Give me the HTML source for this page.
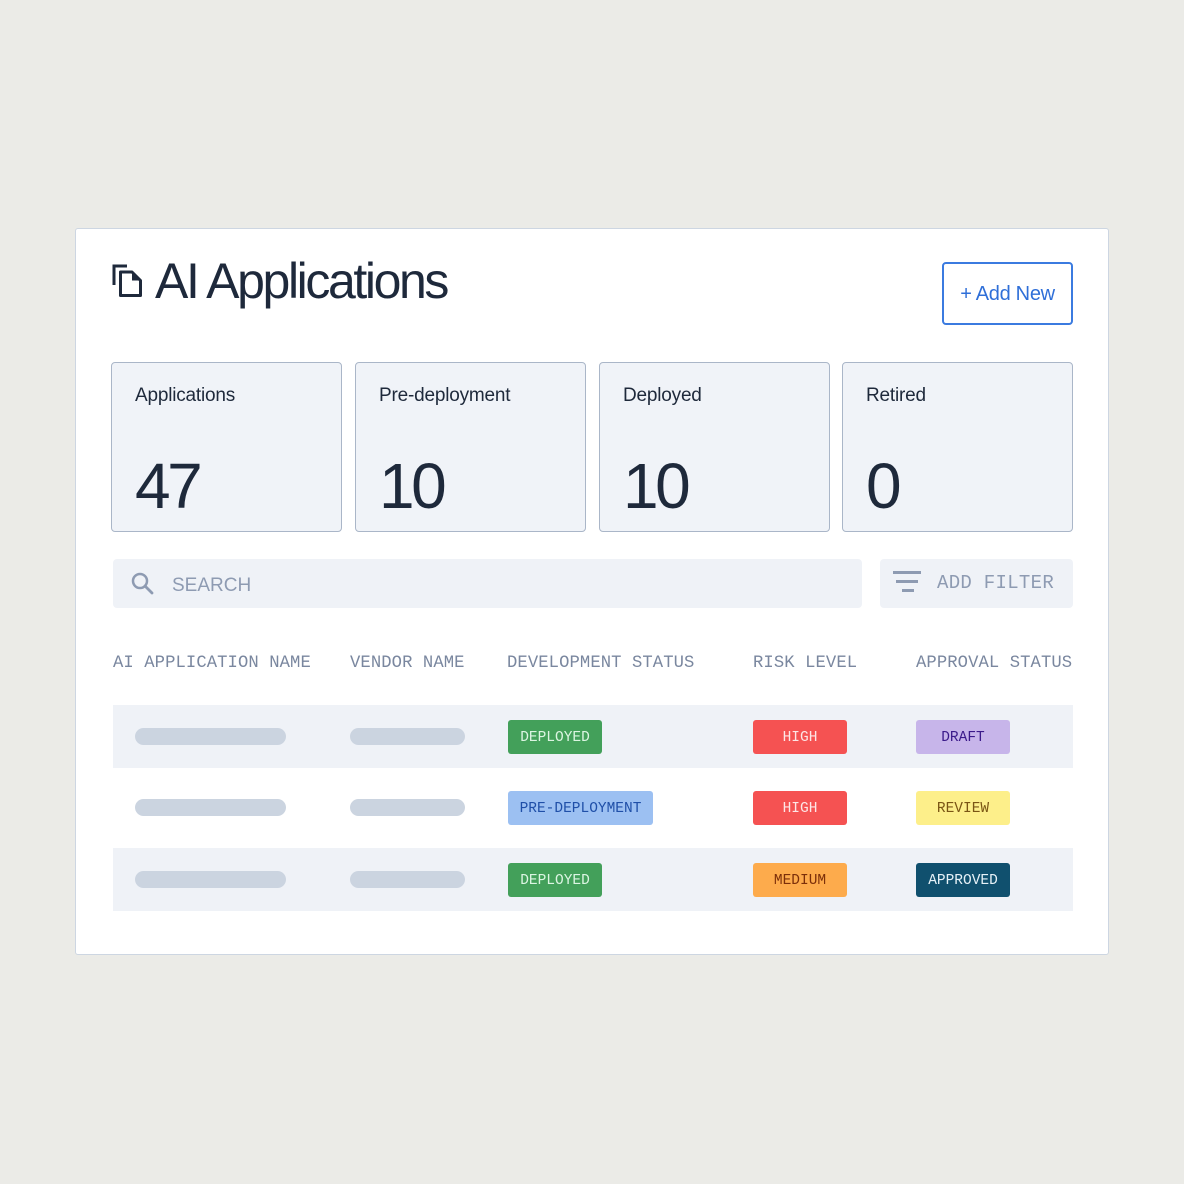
<!DOCTYPE html>
<html><head><style>
*{margin:0;padding:0;box-sizing:border-box}
body{width:1184px;height:1184px;background:#ebebe7;position:relative;font-family:"Liberation Sans",sans-serif;overflow:hidden}
.a{position:absolute}
.card{left:75px;top:228px;width:1034px;height:727px;background:#fff;border:1.5px solid #cdd6e2;border-radius:3px}
.title{left:155px;top:253px;font-size:50px;color:#1e293b;letter-spacing:-2.4px;line-height:56px;white-space:nowrap}
.btn{left:942px;top:262px;width:131px;height:63px;border:2px solid #3b7be0;border-radius:4px;color:#2f6fd8;font-size:20px;text-align:center;line-height:61px;letter-spacing:-0.3px}
.stat{top:362px;width:231px;height:170px;background:#f0f3f8;border:1.5px solid #aab6c8;border-radius:4px}
.stat .l{position:absolute;left:23px;top:22px;font-size:19px;color:#1e293b;letter-spacing:-0.2px}
.stat .n{position:absolute;left:23px;top:85px;font-size:64px;color:#1e293b;letter-spacing:-3.5px;line-height:76px}
.search{left:113px;top:559px;width:749px;height:49px;background:#eff2f7;border-radius:4px}
.filter{left:880px;top:559px;width:193px;height:49px;background:#eff2f7;border-radius:4px}
.mono{font-family:"Liberation Mono",monospace}
.ph{font-size:19px;color:#8e9bb2;line-height:49px}
.hd{top:653px;font-size:17.2px;color:#7a879f;white-space:nowrap;line-height:22px;letter-spacing:0.1px}
.row{left:113px;width:960px;height:63px;background:#eff2f7}
.bar{height:17px;background:#cbd4e0;border-radius:9px}
.bd{height:34px;border-radius:3px;font-family:"Liberation Mono",monospace;font-size:14.5px;text-align:center;line-height:36px;white-space:nowrap}
</style></head><body>
<div class="a card"></div>
<svg class="a" style="left:111px;top:262px" width="34" height="38" viewBox="0 0 34 38">
<path d="M3 23 V4 H16" fill="none" stroke="#1e293b" stroke-width="3"/>
<path d="M9.5 10 H21 L29.5 18.5 V33.5 H9.5 Z" fill="none" stroke="#1e293b" stroke-width="3" stroke-linejoin="round"/>
<path d="M21 10 L29.5 18.5 H21 Z" fill="#1e293b"/>
</svg>
<div class="a title">AI Applications</div>
<div class="a btn">+ Add New</div>

<div class="a stat" style="left:111px"><div class="l">Applications</div><div class="n">47</div></div>
<div class="a stat" style="left:355px"><div class="l">Pre-deployment</div><div class="n">10</div></div>
<div class="a stat" style="left:599px"><div class="l">Deployed</div><div class="n">10</div></div>
<div class="a stat" style="left:842px"><div class="l">Retired</div><div class="n">0</div></div>

<div class="a search"></div>
<svg class="a" style="left:128px;top:570px" width="28" height="28" viewBox="0 0 28 28">
<circle cx="12" cy="11" r="7" fill="none" stroke="#8e9bb2" stroke-width="2.5"/>
<path d="M17 16 L24 23" stroke="#8e9bb2" stroke-width="2.8" stroke-linecap="round"/>
</svg>
<div class="a ph" style="left:172px;top:561px">SEARCH</div>
<div class="a filter"></div>
<svg class="a" style="left:890px;top:568px" width="36" height="28" viewBox="0 0 36 28">
<rect x="3" y="3" width="28" height="3" fill="#8e9bb2"/>
<rect x="6" y="12" width="22" height="3" fill="#8e9bb2"/>
<rect x="12" y="21" width="12" height="3" fill="#8e9bb2"/>
</svg>
<div class="a ph mono" style="left:937px;top:559px;letter-spacing:0.3px">ADD FILTER</div>

<div class="a hd mono" style="left:113px">AI APPLICATION NAME</div>
<div class="a hd mono" style="left:350px">VENDOR NAME</div>
<div class="a hd mono" style="left:507px">DEVELOPMENT STATUS</div>
<div class="a hd mono" style="left:753px">RISK LEVEL</div>
<div class="a hd mono" style="left:916px">APPROVAL STATUS</div>

<div class="a row" style="top:705px"></div>
<div class="a row" style="top:848px"></div>

<div class="a bar" style="left:135px;top:728px;width:151px"></div>
<div class="a bar" style="left:350px;top:728px;width:115px"></div>
<div class="a bar" style="left:135px;top:799px;width:151px"></div>
<div class="a bar" style="left:350px;top:799px;width:115px"></div>
<div class="a bar" style="left:135px;top:871px;width:151px"></div>
<div class="a bar" style="left:350px;top:871px;width:115px"></div>

<div class="a bd" style="left:508px;top:720px;width:94px;background:#43a05a;color:#dcf5e2">DEPLOYED</div>
<div class="a bd" style="left:753px;top:720px;width:94px;background:#f55252;color:#fde6e6">HIGH</div>
<div class="a bd" style="left:916px;top:720px;width:94px;background:#c7b5ea;color:#3b1a8a">DRAFT</div>

<div class="a bd" style="left:508px;top:791px;width:145px;background:#9cc0f2;color:#1f4fa8">PRE-DEPLOYMENT</div>
<div class="a bd" style="left:753px;top:791px;width:94px;background:#f55252;color:#fde6e6">HIGH</div>
<div class="a bd" style="left:916px;top:791px;width:94px;background:#fdef8a;color:#7a5514">REVIEW</div>

<div class="a bd" style="left:508px;top:863px;width:94px;background:#43a05a;color:#dcf5e2">DEPLOYED</div>
<div class="a bd" style="left:753px;top:863px;width:94px;background:#fdab4c;color:#7c2f0a">MEDIUM</div>
<div class="a bd" style="left:916px;top:863px;width:94px;background:#10506e;color:#e6f1f7">APPROVED</div>
</body></html>
